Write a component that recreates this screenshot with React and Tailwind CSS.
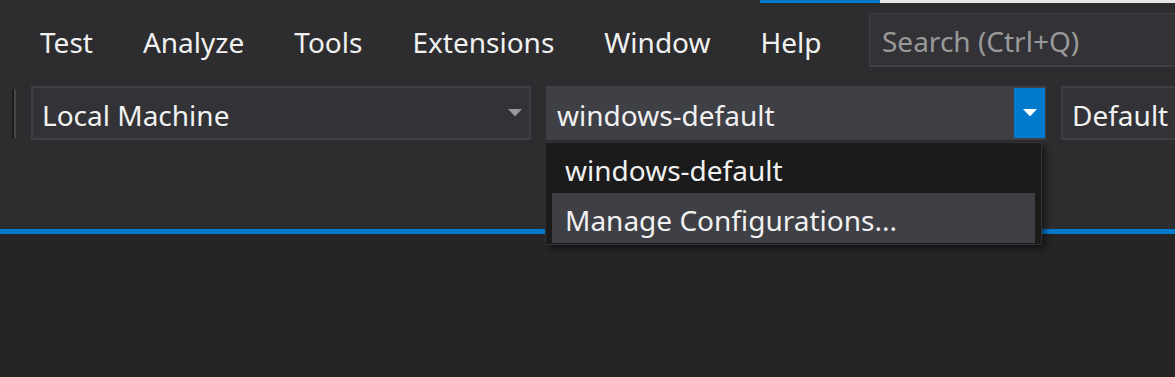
import React from "react";

const menuItems = ["Test", "Analyze", "Tools", "Extensions", "Window", "Help"];

const Arrow = ({ color }) => (
  <svg width="14" height="8" viewBox="0 0 14 8" className="shrink-0">
    <path d="M0 0 L14 0 L7 7.5 Z" fill={color} />
  </svg>
);

const App = () => {
  return (
    <div
      className="w-[1175px] h-[377px] overflow-hidden bg-[#252526] text-[#f1f1f1] flex flex-col"
      style={{ fontFamily: '"Noto Sans", "Open Sans", sans-serif' }}
    >
      <div className="bg-[#2d2d30] flex flex-col">
        {/* title bar strip */}
        <div className="flex h-[3px]">
          <div className="w-[760px]" />
          <div className="w-[120px] bg-[#007acc]" />
          <div className="flex-1 bg-[#e6e6e6]" />
        </div>

        {/* menu bar */}
        <div className="flex items-center h-[77px] pl-[15px] text-[28px] leading-none">
          {menuItems.map((item) => (
            <div key={item} className="px-[25px] pt-[1px] whitespace-nowrap">
              {item}
            </div>
          ))}
          <div className="ml-auto w-[306px] h-[54px] mb-[3px] bg-[#333337] border-t border-l border-b-2 border-[#3f3f46] flex items-center pl-[12px] pt-[3px] text-[#999999] whitespace-nowrap">
            Search (Ctrl+Q)
          </div>
        </div>

        {/* toolbar */}
        <div className="flex items-start pt-[6px] h-[149px] pl-[12px] text-[28px] leading-none">
          <div className="flex h-[49px] mt-[3px] mr-[15px]">
            <div className="w-[2px] bg-[#1b1b1c]" />
            <div className="w-[2px] bg-[#46464a]" />
          </div>

          <div className="w-[500px] h-[54px] bg-[#333337] border-2 border-[#3f3f46] flex items-center pl-[9px] pr-[7px] whitespace-nowrap">
            <span className="flex-1 pt-[3px]">Local Machine</span>
            <Arrow color="#999999" />
          </div>

          <div className="relative ml-[15px]">
            <div className="w-[500px] h-[54px] bg-[#3f3f46] flex items-center pl-[11px] pr-[1px] whitespace-nowrap">
              <span className="flex-1 pt-[3px]">windows-default</span>
              <div className="w-[31px] h-[50px] bg-[#007acc] flex items-center justify-center">
                <Arrow color="#ffffff" />
              </div>
            </div>

            {/* dropdown list */}
            <div className="absolute left-[-1px] top-[56px] w-[497px] h-[103px] bg-[#1b1b1c] border border-[#333337] px-[6px] shadow-[4px_4px_6px_rgba(0,0,0,0.45)] z-10 whitespace-nowrap">
              <div className="h-[50px] flex items-center pl-[13px] pt-[3px]">windows-default</div>
              <div className="h-[50px] flex items-center pl-[13px] pt-[3px] bg-[#3f3f46]">Manage Configurations...</div>
            </div>
          </div>

          <div className="ml-[15px] flex-1 h-[54px] bg-[#333337] border-2 border-r-0 border-[#3f3f46] flex items-center pl-[9px] pt-[3px] whitespace-nowrap">
            Default
          </div>
        </div>
      </div>

      <div className="h-[5px] bg-[#007acc]" />
      <div className="flex-1 bg-[#252526]" />
    </div>
  );
};

export default App;
